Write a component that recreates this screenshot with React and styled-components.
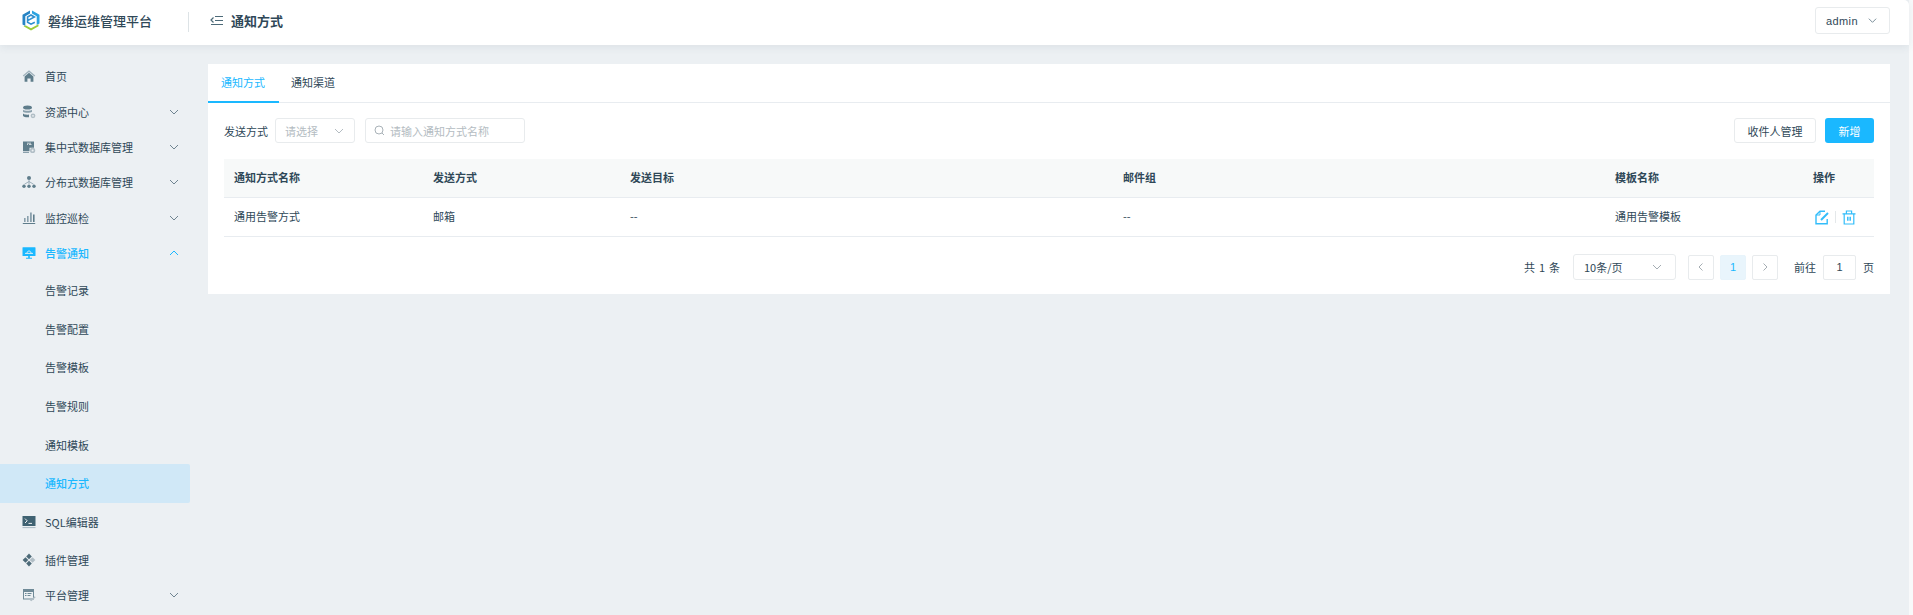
import React from 'react';
import styled, { createGlobalStyle } from 'styled-components';

const Global = createGlobalStyle`
  html, body { margin: 0; padding: 0; height: 100%; overflow: hidden; }
  body { background: #fff; font-family: "Noto Sans CJK SC", "Noto Sans", sans-serif; color: #2f4858; }
  * { box-sizing: border-box; }
`;

const Page = styled.div`
  display: flex;
  height: 615px;
  width: 1913px;
`;
const Main = styled.div`
  flex: 1;
  display: flex;
  flex-direction: column;
  background: #ecf0f3;
  min-width: 0;
`;
const Strip = styled.div`
  width: 4px;
  background: #f8f9fa;
`;
const Header = styled.header`
  height: 45px;
  background: #fff;
  display: flex;
  align-items: center;
  padding: 0 19px 4px 22px;
  box-shadow: 0 2px 8px rgba(60, 80, 100, 0.09);
  border-top-right-radius: 5px;
  position: relative;
  z-index: 1;
`;
const Brand = styled.div`
  display: flex;
  align-items: center;
  gap: 8px;
  width: 166px;
  font-size: 13px;
  font-weight: 500;
  color: #2f4858;
`;
const Divider = styled.span`
  width: 1px;
  height: 20px;
  background: #dde3e6;
  margin-top: 3px;
`;
const Crumb = styled.div`
  display: flex;
  align-items: center;
  gap: 8px;
  margin-left: 21px;
  font-size: 13px;
  font-weight: 700;
  color: #2f4858;
  flex: 1;
`;
const UserButton = styled.button`
  width: 75px;
  height: 27px;
  background: #fff;
  border: 1px solid #e8ebed;
  border-radius: 3px;
  display: flex;
  align-items: center;
  gap: 9px;
  padding: 0 0 0 10px;
  font: 11px "Liberation Sans", sans-serif;
  letter-spacing: 0.4px;
  color: #2f4858;
`;
const Body = styled.div`
  flex: 1;
  display: flex;
  min-height: 0;
`;
const Sidebar = styled.nav`
  width: 190px;
  flex: none;
  padding-top: 12px;
  display: flex;
  flex-direction: column;
`;
const Row = styled.div`
  height: ${p => p.$h || 35.4}px;
  flex: none;
  display: flex;
  align-items: center;
  padding: 0 10px 0 ${p => (p.$sub ? 45 : 22)}px;
  font-size: 11px;
  color: ${p => (p.$blue ? '#1ab8ff' : '#2f4858')};
  font-weight: ${p => (p.$bold ? 500 : 400)};
  background: ${p => (p.$sel ? '#d0e8f7' : 'transparent')};
  border-radius: ${p => (p.$sel ? '0 2px 2px 0' : '0')};
`;
const IconSlot = styled.span`
  width: 14px;
  height: 14px;
  margin-right: 9px;
  display: inline-flex;
  flex: none;
`;
const Label = styled.span`
  flex: 1;
`;
const Content = styled.main`
  flex: 1;
  padding: 19px 19px 0 18px;
  min-width: 0;
`;
const Card = styled.section`
  background: #fff;
  height: 230px;
  display: flex;
  flex-direction: column;
`;
const Tabs = styled.div`
  height: 39px;
  display: flex;
  border-bottom: 1px solid #e8ecf0;
  flex: none;
`;
const Tab = styled.div`
  height: 39px;
  width: ${p => p.$w}px;
  display: flex;
  align-items: center;
  justify-content: ${p => (p.$active ? 'center' : 'flex-start')};
  padding-left: ${p => (p.$active ? 0 : 12)}px;
  padding-right: ${p => (p.$active ? 1 : 0)}px;
  padding-bottom: 1px;
  font-size: 11px;
  color: ${p => (p.$active ? '#1ab8ff' : '#2f4858')};
  border-bottom: 2px solid ${p => (p.$active ? '#1ab8ff' : 'transparent')};
`;
const Panel = styled.div`
  padding: 15px 16px 0;
  flex: 1;
  display: flex;
  flex-direction: column;
`;
const Toolbar = styled.div`
  display: flex;
  align-items: center;
  height: 25px;
`;
const FieldLabel = styled.span`
  font-size: 11px;
  color: #2f4858;
  width: 51px;
  flex: none;
`;
const Box = styled.div`
  height: ${p => p.$h || 25}px;
  width: ${p => p.$w}px;
  margin-left: ${p => p.$ml || 0}px;
  border: 1px solid #e8ebed;
  border-radius: 3px;
  display: flex;
  align-items: center;
  padding: 0 ${p => p.$pr ?? 9}px 0 ${p => p.$pl ?? 9}px;
  font-size: 11px;
  color: ${p => p.$color || '#b4bcc2'};
  background: #fff;
  flex: none;
`;
const Grow = styled.span`
  flex: 1;
`;
const GhostButton = styled.button`
  width: 82px;
  height: 25px;
  background: #fff;
  border: 1px solid #e8ebed;
  border-radius: 3px;
  font: 11px "Noto Sans CJK SC", sans-serif;
  color: #2f4858;
  padding: 0;
`;
const PrimaryButton = styled.button`
  width: 49px;
  height: 25px;
  margin-left: 9px;
  background: #1ab8ff;
  border: none;
  border-radius: 3px;
  font: 11px "Noto Sans CJK SC", sans-serif;
  color: #fff;
  padding: 0;
`;
const Table = styled.div`
  margin-top: 16px;
  display: flex;
  flex-direction: column;
`;
const Columns = styled.div`
  display: grid;
  grid-template-columns: 199px 197px 493px 492px 198px 71px;
  height: 39px;
  align-items: center;
  border-bottom: 1px solid #e8ecf0;
  background: ${p => (p.$head ? '#f7f9f9' : '#fff')};
  font-size: 11px;
  font-weight: ${p => (p.$head ? 700 : 400)};
  color: #2f4858;
`;
const Cell = styled.div`
  padding: 0 10px 2px;
`;
const Actions = styled.div`
  display: flex;
  align-items: center;
  padding-left: 12px;
  gap: 6px;
`;
const Sep = styled.span`
  width: 1px;
  height: 12px;
  background: #e4e8ea;
`;
const Pager = styled.div`
  margin-top: 17px;
  display: flex;
  align-items: center;
  justify-content: flex-end;
  font-size: 11px;
  color: #2f4858;
  height: 26px;
`;
const PagerText = styled.span`
  margin: ${p => p.$m || '0'};
  white-space: pre;
  word-spacing: ${p => p.$ws || 0}px;
`;
const PageBtn = styled.div`
  width: ${p => p.$w || 26}px;
  height: 25px;
  margin-left: ${p => p.$ml ?? 6}px;
  border: 1px solid ${p => (p.$active ? '#e8f4fb' : '#e8ebed')};
  border-radius: 2px;
  background: ${p => (p.$active ? '#e9f5fc' : '#fff')};
  color: ${p => p.$color || '#1ab8ff'};
  display: flex;
  align-items: center;
  justify-content: center;
  font: 11px "Liberation Sans", sans-serif;
`;

const Chevron = ({ up, color = '#6f8490', size = 12 }) => (
  <svg width={size} height={size} viewBox="0 0 12 12" fill="none" stroke={color} strokeWidth="1" style={{ flex: 'none' }}>
    <path d={up ? 'M2 8l4-4 4 4' : 'M2 4l4 4 4-4'} />
  </svg>
);
const Side = ({ d = 'l', color = '#a5adb3' }) => (
  <svg width="10" height="10" viewBox="0 0 10 10" fill="none" stroke={color} strokeWidth="1">
    <path d={d === 'l' ? 'M6.5 1.5L3 5l3.5 3.5' : 'M3.5 1.5L7 5 3.5 8.5'} />
  </svg>
);
const Logo = () => (
  <svg width="18" height="21" viewBox="0 0 18 21">
    <path d="M8 0.5L.5 4.8v9.6l2.8 1.6V6.2L8 3.6z" fill="#2683c4" />
    <path d="M10 0.5l7.5 4.3v8.6l-2.8 1.6V6.2L10 3.6z" fill="#2ba3e0" />
    <path d="M5.6 10.6L12.4 7 9 5 5.6 7v5.2L9 14.2l3.8-2" fill="none" stroke="#2f8fcf" strokeWidth="1.6" />
    <path d="M1.5 16.2L9 20.6l7.5-4.4v-1.9L9 18.2 4 15.4z" fill="#9ccb3b" />
  </svg>
);
const Fold = () => (
  <svg width="13" height="11" viewBox="0 0 13 11" fill="none" stroke="#4d6a78" strokeWidth="1.2">
    <path d="M5 1.5h8M5 5.5h8M1 9.5h12" />
    <path d="M3.5 2.5L1 5l2.5 2.5" />
  </svg>
);
const Home = ({ c = '#5f7d8b' }) => (
  <svg viewBox="0 0 14 14" width="14" height="14">
    <path d="M7 1.2L0.8 6.6l.8.9L7 3l5.4 4.5.8-.9z" fill="#9fb2bc" />
    <path d="M2.6 7.4L7 3.8l4.4 3.6v5.4H8.6V9.4H5.4v3.4H2.6z" fill={c} />
  </svg>
);
const Db = ({ c = '#5f7d8b' }) => (
  <svg viewBox="0 0 14 14" width="14" height="14">
    <ellipse cx="5.5" cy="2.6" rx="4.5" ry="2" fill={c} />
    <path d="M1 4.8c1.4 1.4 7.6 1.4 9 0v2c-1.4 1.4-7.6 1.4-9 0z" fill="#8aa0ac" />
    <path d="M1 8.6c1.2 1.2 4 1.4 6 1v2.6c-2.4.4-5-.1-6-1.2z" fill={c} />
    <circle cx="11" cy="10.8" r="2.4" fill="#b1bec6" />
    <circle cx="11" cy="10.8" r=".9" fill="#ecf0f3" />
  </svg>
);
const Central = ({ c = '#5f7d8b' }) => (
  <svg viewBox="0 0 14 14" width="14" height="14">
    <path d="M1 1.5h11v6.2H7.5v3.5H1z" fill={c} />
    <path d="M1 12h6v1H1z" fill="#8aa0ac" />
    <path d="M5 4.5h1M7 4.5h2.5M5 3.2h4" stroke="#ecf0f3" strokeWidth=".8" />
    <circle cx="10.6" cy="10.4" r="2.6" fill="#b1bec6" />
    <circle cx="10.6" cy="10.4" r="1" fill="#ecf0f3" />
  </svg>
);
const Dist = ({ c = '#5f7d8b' }) => (
  <svg viewBox="0 0 14 14" width="14" height="14">
    <circle cx="7" cy="3" r="2" fill={c} />
    <circle cx="2" cy="11.2" r="1.7" fill={c} />
    <circle cx="7" cy="11.2" r="1.7" fill={c} />
    <circle cx="12" cy="11.2" r="1.7" fill={c} />
    <path d="M7 5v4M2.5 9.2L7 6.5l4.5 2.7" stroke="#8aa0ac" strokeWidth=".8" fill="none" />
  </svg>
);
const Monitor = ({ c = '#5f7d8b' }) => (
  <svg viewBox="0 0 14 14" width="14" height="14">
    <path d="M2 7h1.6v4H2zM5 5h1.6v6H5zM8 1.5h1.8V11H8z" fill="#8aa0ac" />
    <path d="M11 3.5h1.6V11H11z" fill={c} />
    <path d="M.8 12h12.4v1H.8z" fill={c} />
  </svg>
);
const Alert = () => (
  <svg viewBox="0 0 14 14" width="14" height="14">
    <rect x=".5" y="1.2" width="13" height="8.8" rx=".6" fill="#1ab8ff" />
    <path d="M3 7.4h8M5 7.4c0-3.2 4-3.2 4 0" stroke="#ecf0f3" strokeWidth=".9" fill="none" />
    <path d="M6.2 10h1.6v1.8H10v1H4v-1h2.2z" fill="#1ab8ff" />
  </svg>
);
const Term = () => (
  <svg viewBox="0 0 14 14" width="14" height="14">
    <rect x=".5" y="1" width="13" height="10" fill="#3f6272" />
    <path d="M3 3.6L5.2 5.8 3 8" stroke="#fff" strokeWidth=".9" fill="none" />
    <path d="M6.5 8.4h3.5" stroke="#fff" strokeWidth=".9" />
    <path d="M.5 12.2h13v.9H.5z" fill="#9fb2bc" />
  </svg>
);
const Plugin = () => (
  <svg viewBox="0 0 14 14" width="14" height="14">
    <path d="M7 .6l2.8 2.9L7 6.3 4.2 3.5z" fill="#4d6a78" />
    <path d="M3.5 4.2L6.3 7l-2.8 2.8L.6 7z" fill="#4d6a78" />
    <path d="M10.5 4.2L13.4 7l-2.9 2.8L7.7 7z" fill="#b1bec6" />
    <path d="M7 7.7l2.8 2.8L7 13.4l-2.8-2.9z" fill="#4d6a78" />
  </svg>
);
const Platform = () => (
  <svg viewBox="0 0 14 14" width="14" height="14">
    <rect x="1" y="1" width="11" height="10.5" fill="#6f8a97" />
    <path d="M2 4h9v6.5H2z" fill="#ecf0f3" />
    <path d="M3 5.5h1.5M3 7.5h1.5M5.5 5.5h4M5.5 7.5h3" stroke="#5f7d8b" strokeWidth=".9" />
    <path d="M8 12.5l4.8-4.2.9.9-4.4 4z" fill="#b1bec6" />
  </svg>
);
const Search = () => (
  <svg width="11" height="11" viewBox="0 0 11 11" fill="none" stroke="#a9b2b8" strokeWidth="1" style={{ marginRight: 5, flex: 'none' }}>
    <circle cx="5" cy="5" r="4" />
    <path d="M8 8l2 2" />
  </svg>
);
const Edit = () => (
  <svg width="14" height="15" viewBox="0 0 14 15" fill="none" stroke="#33bdfa" strokeWidth="1.4">
    <path d="M10 1.2H5L1 5v8.8h11.2V9" />
    <path d="M5 1.2V5H1" strokeWidth="1" />
    <path d="M6 10L13 3" strokeWidth="2" />
  </svg>
);
const Trash = () => (
  <svg width="14" height="15" viewBox="0 0 14 15" fill="none" stroke="#33bdfa" strokeWidth="1.2">
    <path d="M.5 3.8h13M4.4 3.6V1h5.2v2.6" />
    <path d="M2.2 3.8v10.2h9.6V3.8" />
    <path d="M5.8 6.8v4M8.2 6.8v4" strokeWidth="1.5" />
  </svg>
);

const tops = [
  { label: '资源中心', Icon: Db },
  { label: '集中式数据库管理', Icon: Central },
  { label: '分布式数据库管理', Icon: Dist },
  { label: '监控巡检', Icon: Monitor },
];
const subs = ['告警记录', '告警配置', '告警模板', '告警规则', '通知模板'];

const App = () => (
  <Page>
    <Global />
    <Main>
      <Header>
        <Brand><Logo />磐维运维管理平台</Brand>
        <Divider />
        <Crumb><Fold />通知方式</Crumb>
        <UserButton>admin<Chevron size={11} /></UserButton>
      </Header>
      <Body>
        <Sidebar>
          <Row $h={37}><IconSlot><Home /></IconSlot><Label>首页</Label></Row>
          {tops.map(({ label, Icon }) => (
            <Row key={label}><IconSlot><Icon /></IconSlot><Label>{label}</Label><Chevron /></Row>
          ))}
          <Row $blue $bold><IconSlot><Alert /></IconSlot><Label>告警通知</Label><Chevron up color="#1ab8ff" /></Row>
          {subs.map(s => <Row key={s} $sub $h={38.6}>{s}</Row>)}
          <Row $sub $h={39} $sel $blue $bold>通知方式</Row>
          <Row $h={37.4}><IconSlot><Term /></IconSlot><Label>SQL编辑器</Label></Row>
          <Row $h={38.4}><IconSlot><Plugin /></IconSlot><Label>插件管理</Label></Row>
          <Row $h={33}><IconSlot><Platform /></IconSlot><Label>平台管理</Label><Chevron /></Row>
        </Sidebar>
        <Content>
          <Card>
            <Tabs>
              <Tab $active $w={71}>通知方式</Tab>
              <Tab $w={70}>通知渠道</Tab>
            </Tabs>
            <Panel>
              <Toolbar>
                <FieldLabel>发送方式</FieldLabel>
                <Box $w={80}><Grow>请选择</Grow><Chevron color="#b4bcc2" /></Box>
                <Box $w={160} $ml={10} $pl={8}>
                  <Search />请输入通知方式名称
                </Box>
                <Grow />
                <GhostButton>收件人管理</GhostButton>
                <PrimaryButton>新增</PrimaryButton>
              </Toolbar>
              <Table>
                <Columns $head>
                  {['通知方式名称', '发送方式', '发送目标', '邮件组', '模板名称', '操作'].map(h => <Cell key={h}>{h}</Cell>)}
                </Columns>
                <Columns>
                  <Cell>通用告警方式</Cell>
                  <Cell>邮箱</Cell>
                  <Cell>--</Cell>
                  <Cell>--</Cell>
                  <Cell>通用告警模板</Cell>
                  <Actions><Edit /><Sep /><Trash /></Actions>
                </Columns>
              </Table>
              <Pager>
                <PagerText $m="0 13px 0 0" $ws={1.5}>共 1 条</PagerText>
                <Box $w={103} $h={26} $color="#2f4858" $pr={12} $pl={10}><Grow>10条/页</Grow><Chevron color="#a5adb3" /></Box>
                <PageBtn $ml={12}><Side d="l" /></PageBtn>
                <PageBtn $active>1</PageBtn>
                <PageBtn><Side d="r" /></PageBtn>
                <PagerText $m="0 7px 0 16px">前往</PagerText>
                <PageBtn $ml={0} $w={33} $color="#2f4858">1</PageBtn>
                <PagerText $m="0 0 0 7px">页</PagerText>
              </Pager>
            </Panel>
          </Card>
        </Content>
      </Body>
    </Main>
    <Strip />
  </Page>
);

export default App;
